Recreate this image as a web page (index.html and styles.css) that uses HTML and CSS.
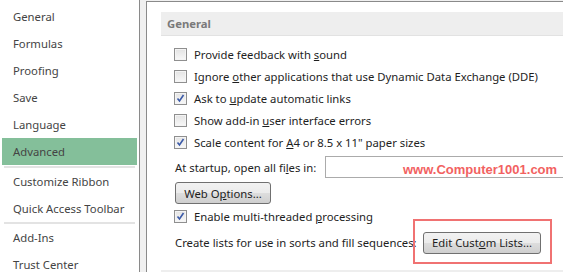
FILE: index.html
```html
<!DOCTYPE html>
<html lang="en">
<head>
  <meta charset="UTF-8">
  <title>Excel Options - Advanced</title>
  <link rel="stylesheet" href="styles.css">
</head>
<body>
  <div class="window">
    <!-- Menu da esquerda -->
    <ul class="nav">
      <li>General</li>
      <li>Formulas</li>
      <li>Proofing</li>
      <li>Save</li>
      <li>Language</li>
      <li class="active">Advanced</li>
      <li class="sep first"></li>
      <li>Customize Ribbon</li>
      <li>Quick Access Toolbar</li>
      <li class="sep"></li>
      <li>Add-Ins</li>
      <li>Trust Center</li>
    </ul>

    <!-- Painel de opções -->
    <div class="panel">
      <div class="section-title">General</div>

      <div class="opt">
        <span class="box"></span>
        <span>Provide feedback with <u>s</u>ound</span>
      </div>
      <div class="opt">
        <span class="box"></span>
        <span>Ignore <u>o</u>ther applications that use Dynamic Data Exchange (DDE)</span>
      </div>
      <div class="opt">
        <span class="box checked"><svg viewBox="0 0 11 11" width="11" height="11"><path d="M2.5 5.5 L4.5 8 L8.5 2" fill="none" stroke="#3b5aa8" stroke-width="1.6"/></svg></span>
        <span>Ask to <u>u</u>pdate automatic links</span>
      </div>
      <div class="opt">
        <span class="box"></span>
        <span>Show add-in <u>u</u>ser interface errors</span>
      </div>
      <div class="opt">
        <span class="box checked"><svg viewBox="0 0 11 11" width="11" height="11"><path d="M2.5 5.5 L4.5 8 L8.5 2" fill="none" stroke="#3b5aa8" stroke-width="1.6"/></svg></span>
        <span>Scale content for <u>A</u>4 or 8.5 x 11" paper sizes</span>
      </div>

      <div class="startup">
        <span class="startup-label">At startup, open all fi<u>l</u>es in:</span>
        <div class="textbox"><span class="watermark">www.Computer1001.com</span></div>
      </div>

      <button class="btn web-btn">Web O<u>p</u>tions...</button>

      <div class="opt">
        <span class="box checked"><svg viewBox="0 0 11 11" width="11" height="11"><path d="M2.5 5.5 L4.5 8 L8.5 2" fill="none" stroke="#3b5aa8" stroke-width="1.6"/></svg></span>
        <span>Enable multi-threaded <u>p</u>rocessing</span>
      </div>

      <div class="lists">
        <span class="lists-label">Create lists for use in sorts and fill sequences:</span>
        <span class="mark"><button class="btn">Edit Cust<u>o</u>m Lists...</button></span>
      </div>

      <div class="section-title next"></div>
    </div>
  </div>
</body>
</html>
```

FILE: styles.css
```css
/* Janela de opções do Excel */
body {
  margin: 0;
  background-color: #f0f0f0;
  font-family: "Noto Sans", "Open Sans", sans-serif;
  font-size: 11.3px;
  overflow: hidden;
}
.window {
  display: flex;
  height: 272px;
  overflow: hidden;
}
.nav {
  list-style: none;
  margin: 0;
  padding: 3px 0 0;
  width: 139px;
  background-color: #fff;
  border-right: 1px solid #8a8a8a;
  flex-shrink: 0;
}
.nav li {
  height: 27px;
  line-height: 27px;
  margin: 0 2px;
  padding-left: 11px;
  color: #444;
  white-space: nowrap;
}
.nav li.active {
  background-color: #84bf9a;
}
.nav li.sep {
  height: 2px;
  margin: 0 4px;
  background-color: #e3e3e3;
}
.nav li.sep.first {
  margin-top: 1px;
}
.panel {
  flex: 1;
  margin-left: 6px;
  margin-top: 1px;
  background-color: #fff;
  border-left: 1px solid #8a8a8a;
  border-top: 1px solid #8a8a8a;
  padding: 10px 0 0 14px;
  color: #1e1e1e;
}
.section-title {
  height: 23px;
  line-height: 23px;
  padding-left: 6px;
  background-color: #eeeeee;
  border-bottom: 1px solid #e2e2e2;
  font-weight: bold;
  color: #7a7a7a;
  margin-bottom: 7px;
}
.section-title.next {
  margin-top: 15px;
  border-bottom: none;
}
.opt {
  display: flex;
  align-items: center;
  gap: 7px;
  height: 22px;
  padding-left: 13px;
  white-space: nowrap;
}
.box {
  width: 11px;
  height: 11px;
  border: 1px solid #8f8f8f;
  background: linear-gradient(#e3e3e3, #f8f8f8);
  box-shadow: inset 0 0 0 1px #f4f4f4;
  display: flex;
}
.startup {
  display: flex;
  align-items: center;
  margin-top: 3px;
  padding-left: 14px;
  white-space: nowrap;
}
.startup-label {
  width: 150px;
  flex-shrink: 0;
}
.textbox {
  flex: 1;
  height: 20px;
  border: 1px solid #ababab;
  border-right: none;
  display: flex;
  align-items: center;
  padding-left: 77px;
}
.watermark {
  font-family: "Liberation Sans", Arial, sans-serif;
  font-weight: bold;
  font-size: 13px;
  color: #f26161;
  margin-top: 5px;
}
.btn {
  font-family: inherit;
  font-size: 11.3px;
  color: #1e1e1e;
  height: 22px;
  padding: 0 6px;
  border: 1px solid #707070;
  border-radius: 3px;
  background: linear-gradient(#f2f2f2 0%, #ebebeb 50%, #dddddd 51%, #cfcfcf 100%);
  white-space: nowrap;
}
.web-btn {
  display: block;
  width: 96px;
  margin: 4px 0 1px 14px;
}
.lists {
  display: flex;
  align-items: center;
  height: 25px;
  margin-top: 3px;
  padding-left: 14px;
  white-space: nowrap;
}
.lists-label {
  width: 238px;
  flex-shrink: 0;
}
.mark {
  position: relative;
  margin-left: 10px;
}
.mark .btn {
  width: 118px;
  display: block;
}
/* Moldura vermelha de destaque */
.mark::after {
  content: "";
  position: absolute;
  left: -10px;
  top: -13px;
  right: -11px;
  bottom: -10px;
  border: 2px solid #f07272;
  pointer-events: none;
}
```
